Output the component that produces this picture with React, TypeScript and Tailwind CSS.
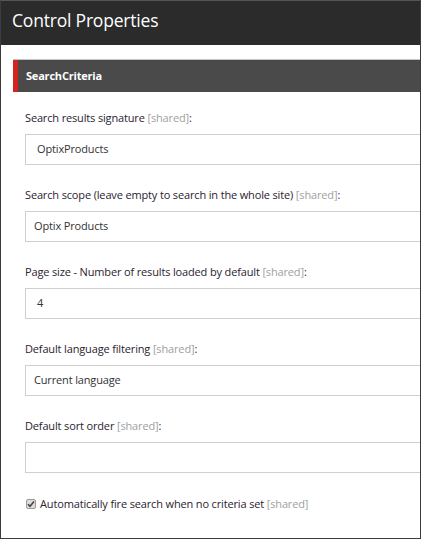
import React from "react";

interface Field {
  label: string;
  value: string;
  indent: string;
}

const fields: Field[] = [
  { label: "Search results signature", value: "OptixProducts", indent: "pl-[11px]" },
  { label: "Search scope (leave empty to search in the whole site)", value: "Optix Products", indent: "pl-[8px]" },
  { label: "Page size - Number of results loaded by default", value: "4", indent: "pl-[11px]" },
  { label: "Default language filtering", value: "Current language", indent: "pl-[8px]" },
  { label: "Default sort order", value: "", indent: "pl-[8px]" },
];

const font = { fontFamily: '"Open Sans", "Noto Sans", sans-serif' };

export default function App() {
  return (
    <div
      className="w-[421px] h-[539px] bg-white border border-[#3c3c3c] border-t-[#555555] overflow-hidden"
      style={font}
    >
      <div className="h-[44px] bg-[#2b2b2b] pl-[11px] pt-[9px]">
        <h1 className="text-white text-[17.5px] leading-[20px] tracking-[-0.2px]">Control Properties</h1>
      </div>

      <div className="pt-[14px] pl-[12px]">
        <div className="w-[440px] border-t border-[#c4c4c4] h-[33px] bg-[#4a4a4a] flex items-center">
          <div className="w-[5px] self-stretch bg-[#d4241c]" />
          <span className="pl-[8px] text-white text-[11px] font-bold tracking-[-0.2px]">SearchCriteria</span>
        </div>
      </div>

      <div className="pl-[24px] pt-[18px] tracking-[-0.15px]">
        {fields.map((f, idx) => (
          <div key={idx} className={idx === 0 ? "" : "mt-[22px]"}>
            <div className="text-[11px] leading-[16px] text-[#2a2330]">
              {f.label} <span className="text-[#a0a0a0]">[shared]</span>:
            </div>
            <div
              className={`mt-[8px] w-[430px] h-[31px] border border-[#cfcfcf] flex items-center text-[11px] text-[#333333] ${f.indent}`}
            >
              {f.value}
            </div>
          </div>
        ))}

        <div className="mt-[23px] flex items-center h-[16px]">
          <span className="w-[10px] h-[10px] border border-[#9a9a9a] bg-[#dcdcdc] rounded-[2px] flex items-center justify-center ml-[1px]">
            <svg width="8" height="8" viewBox="0 0 8 8">
              <path d="M1 4.2 L3 6.2 L7 1.5" fill="none" stroke="#444444" strokeWidth="1.6" />
            </svg>
          </span>
          <span className="ml-[4px] text-[11px] leading-[16px] text-[#2a2330]">
            Automatically fire search when no criteria set <span className="text-[#a0a0a0]">[shared]</span>
          </span>
        </div>
      </div>
    </div>
  );
}
